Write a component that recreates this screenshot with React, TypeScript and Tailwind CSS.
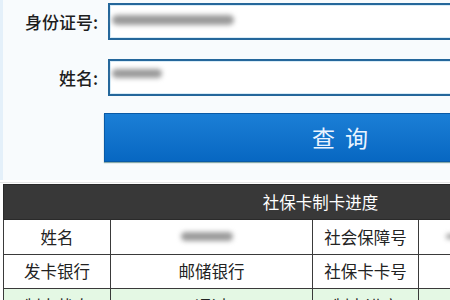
import React from "react";

const font = { fontFamily: '"Noto Sans CJK SC", "Noto Sans", sans-serif' };

function Blur({ className }: { className: string }) {
  return <div className={`absolute rounded-full bg-[#9a9a9a] blur-[2.5px] ${className}`} />;
}

function FieldRow({ label, blurClass }: { label: string; blurClass: string }) {
  return (
    <div className="flex items-center">
      <div className="w-[95px] shrink-0 whitespace-nowrap text-right text-[17px] font-medium text-[#1e1e1e]">{label}</div>
      <div className="relative ml-[10px] h-[37px] w-[520px] shrink-0 border-2 border-[#25679b] bg-white shadow-[inset_0_0_0_1px_#d9ecf7]">
        <Blur className={blurClass} />
      </div>
    </div>
  );
}

export default function App() {
  const cell = "border border-[#3a3a3a] text-center text-[16.5px] text-[#222] font-normal whitespace-nowrap";
  return (
    <div className="relative h-[300px] w-[450px] overflow-hidden bg-white" style={font}>
      <div className="flex flex-col border-l-[3px] border-[#e4f0fa] bg-[#f8fbfd] pb-[18px] pt-[3px]">
        <FieldRow label="身份证号:" blurClass="left-[2px] top-[10px] h-[10px] w-[122px]" />
        <div className="h-[19px]" />
        <FieldRow label="姓名:" blurClass="left-[2px] top-[8px] h-[9px] w-[50px]" />
        <div className="h-[17px]" />
        <button className="ml-[101px] h-[49px] w-[472px] shrink-0 border border-[#0a5aa6] bg-gradient-to-b from-[#1b7fd6] to-[#0767c2] text-[23px] tracking-[10px] text-[#eaf4ff] shadow-[0_1px_1px_#8aa]">
          <span className="pl-[10px]">查询</span>
        </button>
      </div>
      <div className="h-[3px] border-b border-[#e6e6e6]" />
      <table className="ml-[3px] mt-[1px] w-[634px] table-fixed border-collapse">
        <colgroup>
          <col className="w-[107px]" />
          <col className="w-[202px]" />
          <col className="w-[106px]" />
          <col className="w-[219px]" />
        </colgroup>
        <thead>
          <tr className="h-[35px] bg-[#383838]">
            <th colSpan={4} className="border border-[#2a2a2a] text-center text-[16.5px] font-normal text-white">
              社保卡制卡进度
            </th>
          </tr>
        </thead>
        <tbody>
          <tr className="h-[35px] bg-white">
            <td className={cell}>姓名</td>
            <td className={`${cell} relative`}>
              <Blur className="left-[70px] top-[12px] h-[9px] w-[52px]" />
            </td>
            <td className={cell}>社会保障号</td>
            <td className={`${cell} relative`}>
              <Blur className="left-[27px] top-[14px] h-[5px] w-[12px]" />
            </td>
          </tr>
          <tr className="h-[34px] bg-white">
            <td className={cell}>发卡银行</td>
            <td className={cell}>邮储银行</td>
            <td className={cell}>社保卡卡号</td>
            <td className={cell}></td>
          </tr>
          <tr className="h-[35px] bg-[#e4f8e4]">
            <td className={cell}>制卡状态</td>
            <td className={cell}>通过</td>
            <td className={cell}>制卡进度</td>
            <td className={cell}></td>
          </tr>
        </tbody>
      </table>
    </div>
  );
}
